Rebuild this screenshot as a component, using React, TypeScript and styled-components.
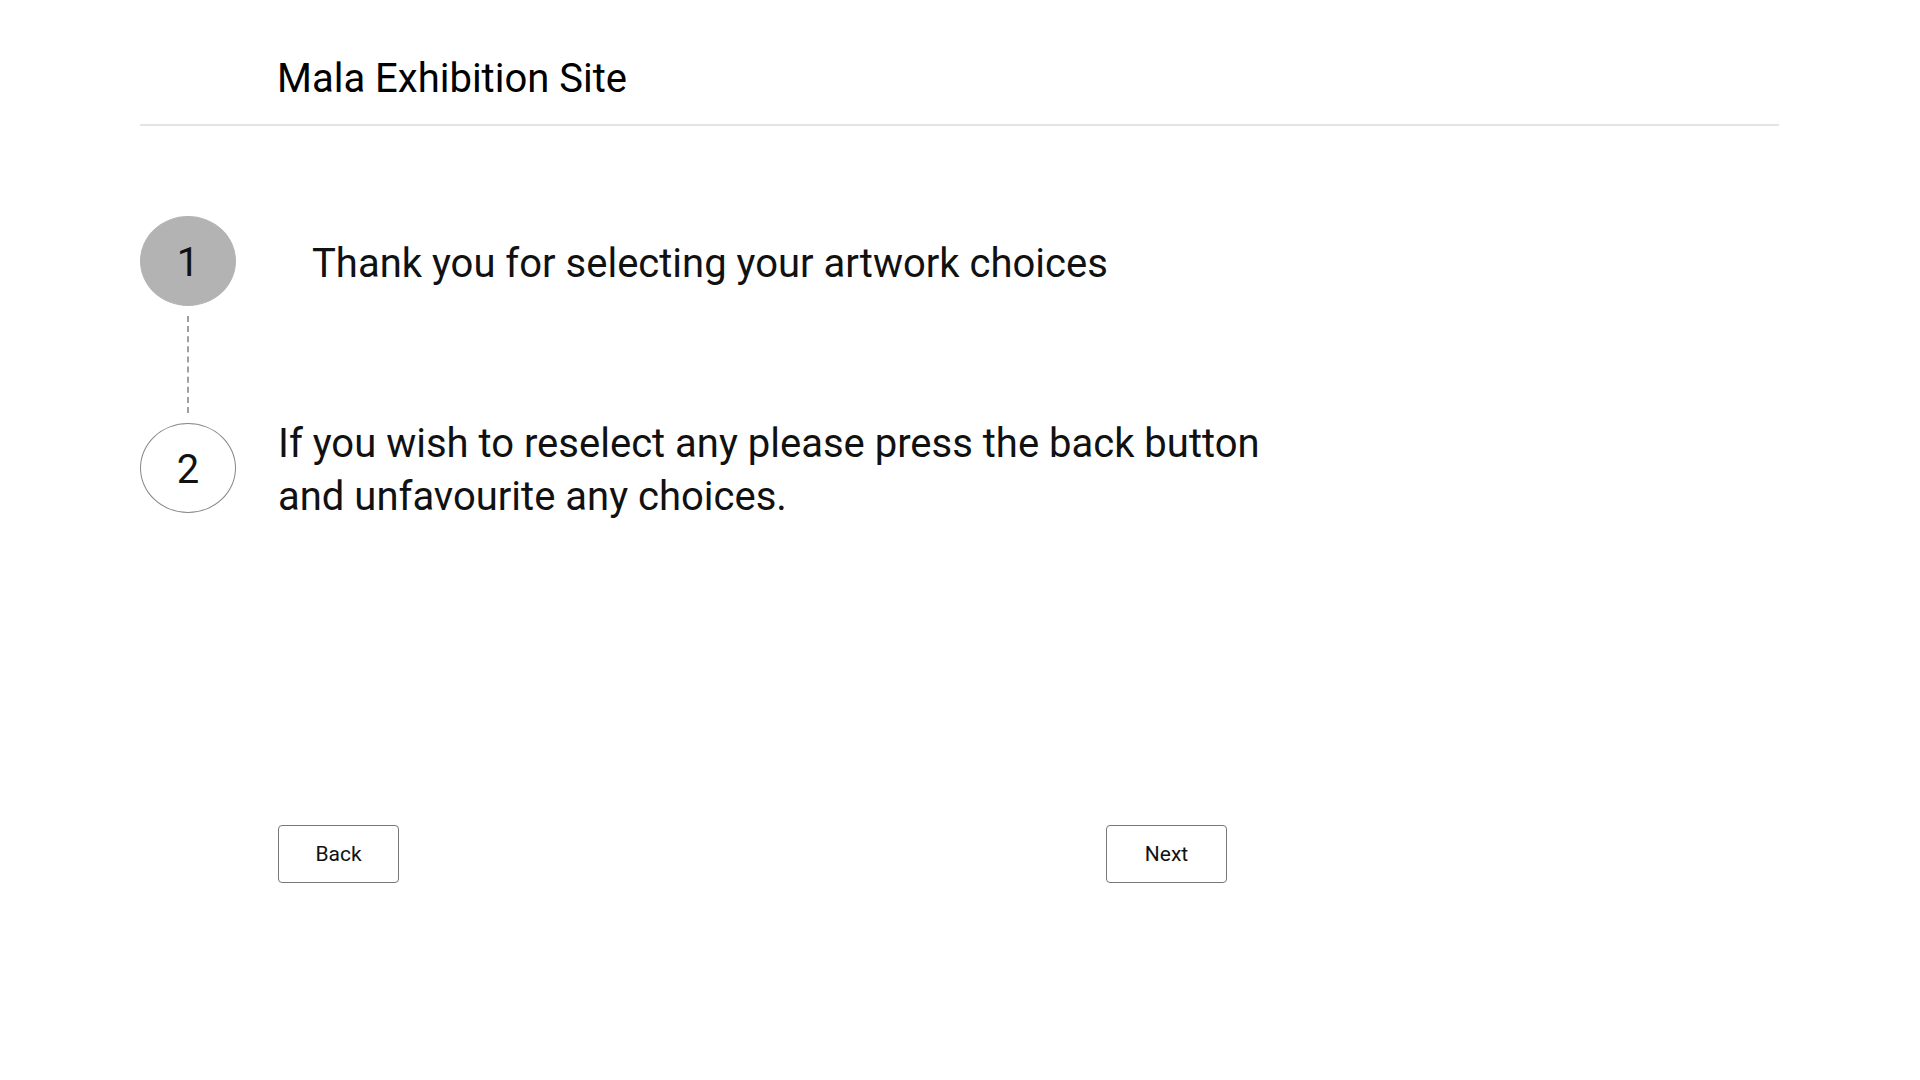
import React from "react";
import styled, { createGlobalStyle } from "styled-components";

const Global = createGlobalStyle`
  html, body { margin: 0; padding: 0; background: #ffffff; }
  body { font-family: Roboto, "Noto Sans", Arial, sans-serif; color: #111111; }
`;

const Page = styled.div`
  padding: 0 141px 0 140px;
`;

const Header = styled.header`
  height: 126px;
  border-bottom: 2px solid #e4e4e4;
  display: flex;
  align-items: flex-end;
  padding: 0 0 22px 137px;
  box-sizing: border-box;
`;

const Title = styled.h1`
  margin: 0;
  font-weight: 400;
  font-size: 40px;
  line-height: 47px;
  color: #000;
`;

const Steps = styled.div`
  margin-top: 90px;
  display: flex;
  flex-direction: column;
`;

const StepRow = styled.div<{ $indent: number }>`
  display: flex;
  align-items: flex-start;
  gap: ${(p) => p.$indent}px;
`;

const Circle = styled.div<{ $active?: boolean }>`
  flex: none;
  width: 96px;
  height: 90px;
  border-radius: 50%;
  box-sizing: border-box;
  padding-top: 3px;
  background: ${(p) => (p.$active ? "#b3b3b3" : "#ffffff")};
  border: 1px solid ${(p) => (p.$active ? "#b3b3b3" : "#888888")};
  display: flex;
  align-items: center;
  justify-content: center;
  font-size: 40px;
  color: #111;
`;

const StepText = styled.p`
  margin: -6px 0 0;
  font-size: 40px;
  line-height: 53px;
  color: #111;
  max-width: 1000px;
`;

const StepTextCentered = styled(StepText)`
  margin: 0;
  padding-top: 4px;
  height: 90px;
  box-sizing: border-box;
  display: flex;
  align-items: center;
`;

const Connector = styled.div`
  width: 96px;
  display: flex;
  justify-content: center;
  padding: 10px 0 10px;
`;

const Dash = styled.div`
  width: 0;
  height: 97px;
  border-left: 2px dashed #a0a0a0;
`;

const Actions = styled.div`
  margin-top: 302px;
  margin-left: 138px;
  width: 949px;
  display: flex;
  justify-content: space-between;
`;

const Button = styled.button`
  width: 121px;
  height: 58px;
  background: #fff;
  border: 1px solid #777;
  border-radius: 4px;
  font-family: Roboto, "Noto Sans", Arial, sans-serif;
  font-size: 21px;
  color: #111;
  cursor: pointer;
`;

export default function App() {
  return (
    <>
      <Global />
      <Page>
        <Header>
          <Title>Mala Exhibition Site</Title>
        </Header>
        <Steps>
          <StepRow $indent={76}>
            <Circle $active>1</Circle>
            <StepTextCentered>Thank you for selecting your artwork choices</StepTextCentered>
          </StepRow>
          <Connector>
            <Dash />
          </Connector>
          <StepRow $indent={42}>
            <Circle>2</Circle>
            <StepText>
              If you wish to reselect any please press the back button
              <br />
              and unfavourite any choices.
            </StepText>
          </StepRow>
        </Steps>
        <Actions>
          <Button>Back</Button>
          <Button>Next</Button>
        </Actions>
      </Page>
    </>
  );
}
